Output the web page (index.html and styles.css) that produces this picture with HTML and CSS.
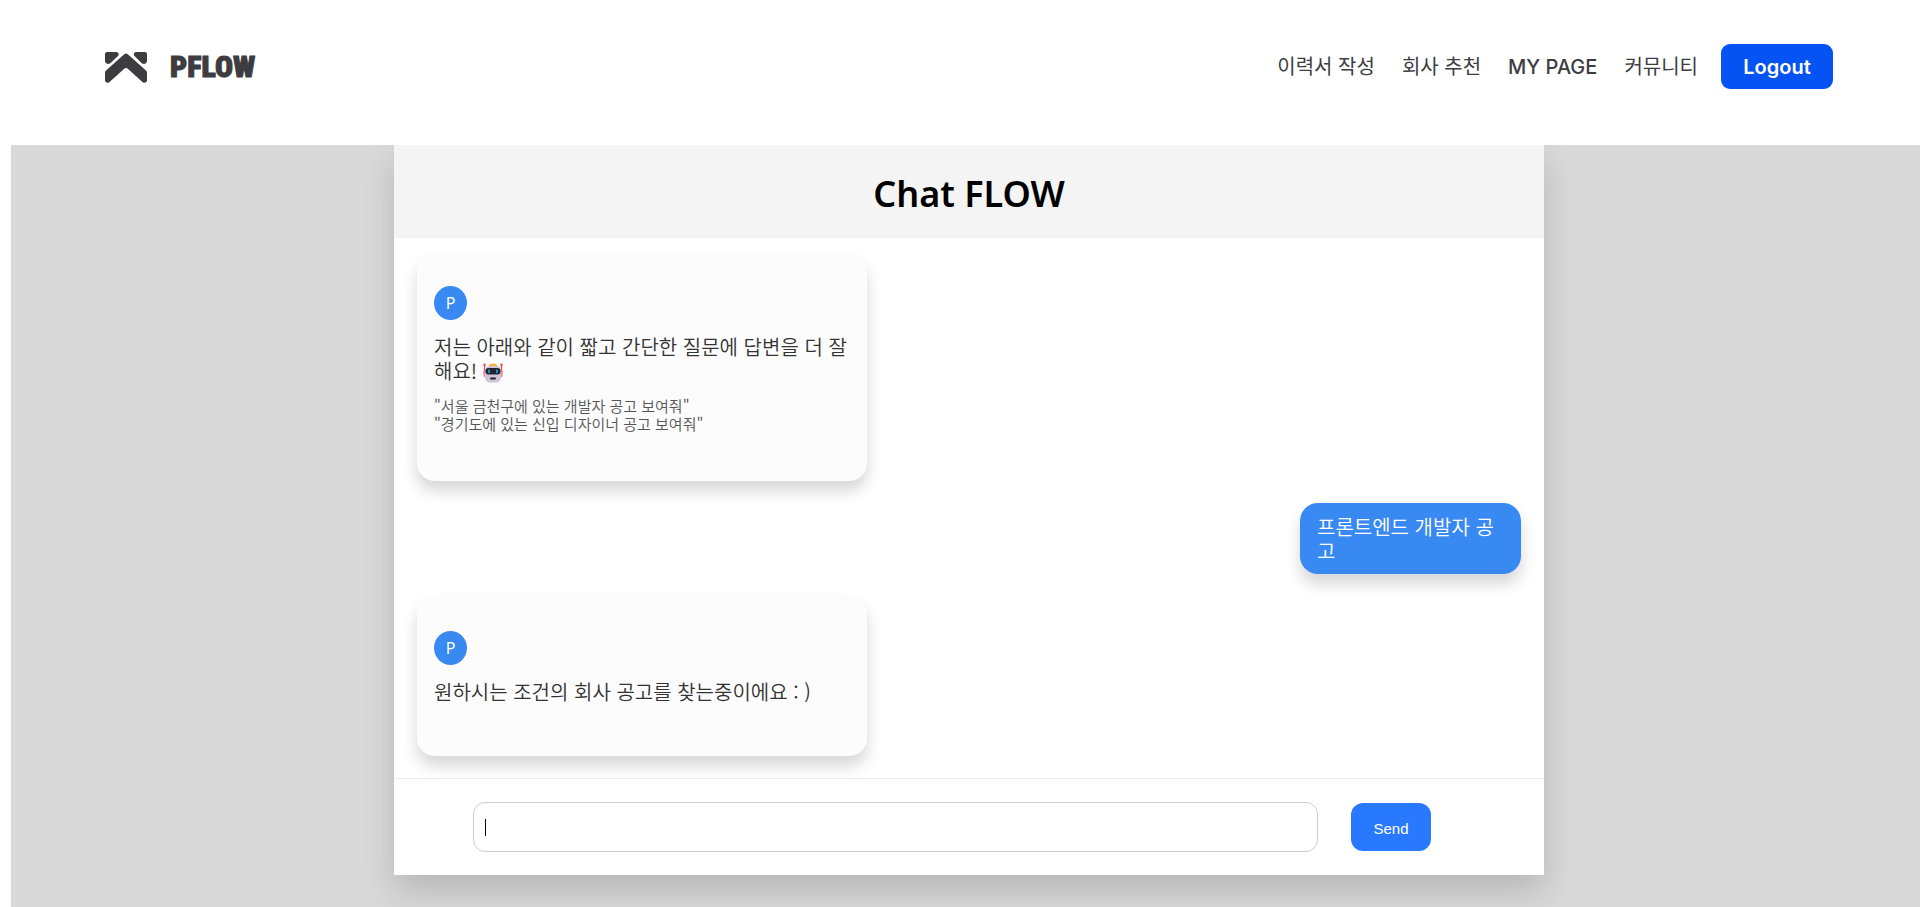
FILE: index.html
```html
<!DOCTYPE html>
<html lang="ko">
<head>
<meta charset="utf-8">
<title>PFLOW</title>
<link rel="stylesheet" href="styles.css">
</head>
<body>
<header class="site-header">
  <a class="brand" href="#">
    <svg class="brand-mark" viewBox="0 0 42 31" aria-hidden="true">
      <path d="M2 0H11.500Q15 1 13 4L5 11.500Q1 13 0 9.500V2Q0 0 2 0ZM31 0H40Q42 0 42 2V9.500Q41 13 37 11.500L29.500 4Q27.500 1 31 0ZM19.500 2Q21 1 22.500 2L41 18.500Q42 19.500 42 20.500V29Q41 31.500 38 30.500L22.500 16.500Q21 15.300 19.500 16.500L4 30.500Q1 31.500 0 29V20.500Q0 19.500 1 18.500Z"/>
    </svg>
    <span class="brand-name">PFLOW</span>
  </a>
  <nav class="nav">
    <a href="#">이력서 작성</a>
    <a href="#">회사 추천</a>
    <a class="latin" href="#">MY PAGE</a>
    <a href="#">커뮤니티</a>
    <button class="logout" type="button">Logout</button>
  </nav>
</header>
<main class="page">
  <section class="chat">
    <h1 class="chat-title">Chat FLOW</h1>
    <div class="messages">
      <article class="bubble bot">
        <span class="avatar">P</span>
        <p class="text">저는 아래와 같이 짧고 간단한 질문에 답변을 더 잘해요! <svg class="robot" viewBox="0 0 20 20" role="img" aria-label="로봇"><path d="M1.500 2V14M18.500 2V14" stroke="#e5484d" stroke-width="1.300"/><circle cx="1.500" cy="1.800" r="1.200" fill="#e5484d"/><circle cx="18.500" cy="1.800" r="1.200" fill="#e5484d"/><path d="M0 8H3V14H1ZM20 8H17V14H19Z" fill="#f08a8d"/><ellipse cx="10" cy="2.500" rx="4" ry="2" fill="#f9b13c"/><path d="M5 3H15Q18 5 18 9V15Q17 19.500 13 19.500H7Q3 19.500 2 15V9Q2 5 5 3Z" fill="#cdc4d6"/><rect x="2.500" y="5" width="15" height="6.500" rx="3" fill="#26222c"/><rect x="5" y="6.500" width="2" height="3.500" fill="#0a91cf"/><rect x="13" y="6.500" width="2" height="3.500" fill="#0a91cf"/><rect x="7" y="14.500" width="6" height="2" rx="1" fill="#26222c"/></svg></p>
        <p class="examples">"서울 금천구에 있는 개발자 공고 보여줘"<br>"경기도에 있는 신입 디자이너 공고 보여줘"</p>
      </article>
      <article class="bubble user">
        <p class="text">프론트엔드 개발자 공고</p>
      </article>
      <article class="bubble bot status">
        <span class="avatar">P</span>
        <p class="text">원하시는 조건의 회사 공고를 찾는중이에요 : )</p>
      </article>
    </div>
    <form class="composer">
      <label class="field"><input class="field-input" type="text" aria-label="메시지"></label>
      <button class="send" type="button">Send</button>
    </form>
  </section>
</main>
</body>
</html>
```
FILE: styles.css
```css
* {
  box-sizing: border-box;
}

body {
  margin: 0;
  min-height: 100vh;
  display: flex;
  flex-direction: column;
  background: #fff;
  font-family: "Noto Sans CJK KR", sans-serif;
}

h1,
p {
  margin: 0;
}

.site-header {
  position: relative;
  z-index: 1;
  display: flex;
  align-items: center;
  justify-content: space-between;
  padding: 44px 87px 56px 105px;
  background: #fff;
}

.brand {
  display: flex;
  align-items: center;
  gap: 23px;
  color: #3c3c41;
  text-decoration: none;
}

.brand-mark {
  width: 42px;
  height: 31px;
  margin-top: 1px;
  fill: currentColor;
}

.brand-name {
  font-family: "Liberation Sans Narrow", "Roboto Condensed", "Open Sans Condensed", "Liberation Sans", sans-serif;
  font-size: 30px;
  font-weight: 900;
  line-height: 45px;
  -webkit-text-stroke: 1px currentColor;
}

.nav {
  display: flex;
  align-items: center;
  gap: 27px;
  font-family: Inter, "Noto Sans CJK KR", sans-serif;
  font-size: 20px;
  line-height: 45px;
}

.nav a {
  padding-top: 2px;
  line-height: 43px;
  color: #3c3c41;
  text-decoration: none;
}

.nav .latin {
  font-weight: 500;
}

.logout {
  width: 112px;
  height: 45px;
  margin-left: -4px;
  padding: 0;
  border: 0;
  border-radius: 9px;
  background: #0553f3;
  color: #fff;
  font: 600 20px Inter, sans-serif;
}

.page {
  flex: 1;
  margin-left: 11px;
  padding: 0 0 32px 7px;
  background: #d9d9d9;
}

.chat {
  max-width: 1150px;
  margin: 0 auto;
  background: #fff;
  box-shadow: 0 16px 32px rgba(0, 0, 0, 0.16);
}

.chat-title {
  padding: 25px 0 20px;
  background: #f4f4f4;
  color: #000;
  font: 600 36px/48px "Noto Sans", sans-serif;
  text-align: center;
}

.messages {
  display: flex;
  flex-direction: column;
  gap: 22px;
  padding: 16px 23px 22px;
}

.bubble {
  border-radius: 18px;
  box-shadow: 0 10px 15px rgba(0, 0, 0, 0.16);
}

.bot {
  width: 450px;
  max-width: 100%;
  padding: 32px 17px 48px;
  background: #fcfcfc;
  color: #333;
}

.status {
  padding: 35px 17px 52px;
}

.user {
  align-self: flex-end;
  width: 221px;
  padding: 12px 17px 11px;
  background: #3989f2;
  color: #fff;
}

.avatar {
  display: flex;
  align-items: center;
  justify-content: center;
  width: 33px;
  height: 34px;
  margin-bottom: 15px;
  border-radius: 50%;
  background: #3989f2;
  color: #fff;
  font: 400 16px "Noto Sans", sans-serif;
}

.text {
  font-size: 20px;
  font-weight: 350;
  line-height: 24px;
}

.robot {
  width: 20px;
  height: 20px;
  vertical-align: -4px;
}

.examples {
  margin-top: 14px;
  color: #555;
  font-size: 15px;
  font-weight: 350;
  line-height: 18px;
}

.composer {
  display: flex;
  align-items: center;
  gap: 33px;
  padding: 23px 113px 23px 79px;
  border-top: 1px solid #ececec;
}

.field {
  position: relative;
  flex: 1;
}

.field::before {
  content: "";
  position: absolute;
  top: 17px;
  left: 12px;
  width: 1px;
  height: 17px;
  background: #000;
}

.field-input {
  display: block;
  width: 100%;
  height: 50px;
  padding: 0 11px;
  border: 1px solid #ccc;
  border-radius: 12px;
  outline: 0;
  background: transparent;
  font: 15px "Liberation Sans", sans-serif;
}

.send {
  width: 80px;
  height: 48px;
  padding: 2px 0 0;
  border: 0;
  border-radius: 12px;
  background: #2979ff;
  color: #fff;
  font: 15px "Liberation Sans", sans-serif;
}
```
